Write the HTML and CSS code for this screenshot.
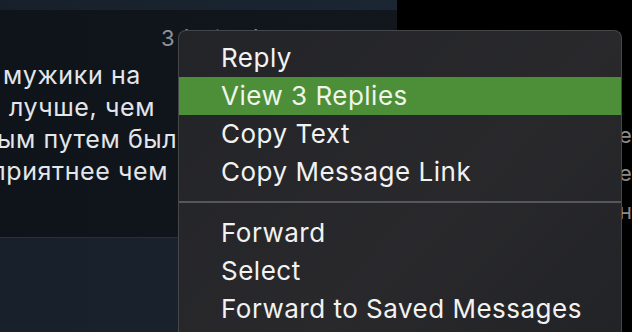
FILE: index.html
```html
<!DOCTYPE html>
<html lang="en">
<head>
    <meta charset="UTF-8">
    <meta name="viewport" content="width=device-width, initial-scale=1.0">
    <title>Message menu</title>
    <link rel="stylesheet" href="styles.css">
</head>
<body>

    <div class="screen">
        <div class="chat">
            <div class="chat-top"></div>
            <div class="bubble">
                <div class="meta">3 (edited) 16:53</div>
                <div class="line line1">мужики на</div>
                <div class="line line2">лучше, чем</div>
                <div class="line line3">ым путем был</div>
                <div class="line line4">приятнее чем</div>
            </div>
            <div class="chat-bottom"></div>
        </div>
        <div class="side">
            <div class="side-line">е</div>
            <div class="side-line">е</div>
            <div class="side-line">н</div>
        </div>
    </div>

    <!-- context menu over the message -->
    <div class="menu">
        <div class="item">Reply</div>
        <div class="item active">View 3 Replies</div>
        <div class="item">Copy Text</div>
        <div class="item">Copy Message Link</div>
        <div class="sep"></div>
        <div class="item">Forward</div>
        <div class="item">Select</div>
        <div class="item">Forward to Saved Messages</div>
    </div>

</body>
</html>
```

FILE: styles.css
```css
body {
    margin: 0;
    width: 632px;
    height: 332px;
    overflow: hidden;
    background-color: #000;
    font-family: Inter, "Noto Sans", sans-serif;
}

.screen {
    display: flex;
    height: 332px;
}

.chat {
    flex: none;
    width: 397px;
    display: flex;
    flex-direction: column;
}

.chat-top {
    height: 10px;
    background: linear-gradient(90deg, #17202a, #1b2633);
}

.bubble {
    height: 227px;
    background: linear-gradient(90deg, #0f141b, #12171e);
    border-bottom: 1px solid #27303b;
    overflow: hidden;
}

.meta {
    margin-top: 15px;
    padding-left: 161px;
    height: 34px;
    font-size: 22px;
    line-height: 26px;
    color: #8b929b;
    white-space: nowrap;
}

.line {
    font-size: 25px;
    line-height: 32px;
    letter-spacing: 0.6px;
    color: #e3e6ea;
    white-space: nowrap;
}

.line1 { text-indent: 3px; }
.line2 { text-indent: 9px; }
.line3 { text-indent: -3px; }
.line4 { text-indent: -9px; }

.chat-bottom {
    flex: 1;
    background: linear-gradient(90deg, #18212b, #1a232e);
}

.side {
    flex: 1;
    min-width: 0;
    padding-top: 116px;
    padding-left: 222px;
    white-space: nowrap;
    overflow: hidden;
}

.side-line {
    font-size: 22px;
    line-height: 38px;
    color: #8a8a8a;
}

.menu {
    position: absolute;
    left: 178px;
    top: 30px;
    width: 444px;
    height: 302px;
    padding-top: 8px;
    background: linear-gradient(135deg, #232428, #29292c 60%, #222326);
    border: 1px solid #45464a;
    border-bottom: none;
    border-radius: 8px 8px 0 0;
    box-sizing: border-box;
    overflow: hidden;
}

.item {
    height: 38px;
    padding-left: 42px;
    font-size: 26px;
    line-height: 38px;
    letter-spacing: 0.5px;
    color: #f2f2f2;
    white-space: nowrap;
}

.item.active {
    background-color: #4c8f38;
    color: #eef5ea;
}

.sep {
    height: 2px;
    margin: 10px -1px 11px;
    background-color: #55575b;
}
```
